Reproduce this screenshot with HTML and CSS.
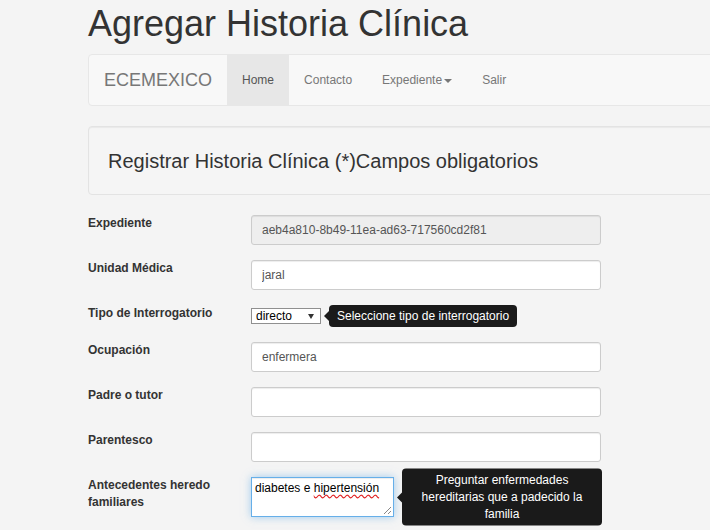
FILE: index.html
```html
<!DOCTYPE html>
<html lang="es">
<head>
  <meta charset="UTF-8">
  <meta name="viewport" content="width=device-width, initial-scale=1.0">
  <title>Agregar Historia Clínica</title>
  <link rel="stylesheet" href="styles.css">
</head>
<body>
  <div class="container">
    <h1>Agregar Historia Clínica</h1>

    <div class="navbar">
      <a class="brand" href="#">ECEMEXICO</a>
      <ul class="nav">
        <li class="active"><a href="#">Home</a></li>
        <li><a href="#">Contacto</a></li>
        <li><a href="#">Expediente<span class="caret"></span></a></li>
        <li><a href="#">Salir</a></li>
      </ul>
    </div>

    <div class="well">Registrar Historia Clínica (*)Campos obligatorios</div>

    <form class="form-horizontal">
      <div class="form-group">
        <label>Expediente</label>
        <input type="text" class="form-control" value="aeb4a810-8b49-11ea-ad63-717560cd2f81" disabled>
      </div>
      <div class="form-group">
        <label>Unidad Médica</label>
        <input type="text" class="form-control" value="jaral">
      </div>
      <div class="form-group">
        <label>Tipo de Interrogatorio</label>
        <div class="control-inline">
          <div class="has-tip">
            <span class="select-wrap">
              <select>
                <option>directo</option>
                <option>indirecto</option>
              </select>
            </span>
            <div class="tip">Seleccione tipo de interrogatorio</div>
          </div>
        </div>
      </div>
      <div class="form-group">
        <label>Ocupación</label>
        <input type="text" class="form-control" value="enfermera">
      </div>
      <div class="form-group">
        <label>Padre o tutor</label>
        <input type="text" class="form-control">
      </div>
      <div class="form-group">
        <label>Parentesco</label>
        <input type="text" class="form-control">
      </div>
      <div class="form-group">
        <label>Antecedentes heredo familiares</label>
        <div class="has-tip">
          <div class="textarea">diabetes e <span class="misspelled">hipertensión</span>
            <svg class="grip" width="8" height="8" viewBox="0 0 8 8">
              <line x1="8" y1="1" x2="1" y2="8" stroke="#888" stroke-width="1"/>
              <line x1="8" y1="5" x2="5" y2="8" stroke="#888" stroke-width="1"/>
            </svg>
          </div>
          <div class="tip tip-wrap">Preguntar enfermedades hereditarias que a padecido la familia</div>
        </div>
      </div>
    </form>
  </div>
</body>
</html>
```

FILE: styles.css
```css
* { box-sizing: border-box; }
html, body { overflow: hidden; }
body {
  margin: 0;
  background: #f4f4f4;
  font-family: "Liberation Sans", Arial, sans-serif;
  font-size: 12px;
  line-height: 17px;
  color: #333;
}
.container {
  margin-left: 88px;
  width: 760px;
}
h1 {
  margin: 4px 0 10px;
  font-size: 36px;
  line-height: 40px;
  font-weight: normal;
  color: #333;
}

/* Navbar */
.navbar {
  display: flex;
  height: 52px;
  background: #f8f8f8;
  border: 1px solid #e7e7e7;
  border-radius: 4px;
  margin-bottom: 20px;
}
.brand {
  padding: 15px;
  font-size: 18px;
  line-height: 20px;
  color: #777;
  text-decoration: none;
}
.nav {
  display: flex;
  list-style: none;
  margin: 0;
  padding: 0;
}
.nav a {
  display: block;
  padding: 15px;
  line-height: 20px;
  color: #777;
  text-decoration: none;
}
.nav .active a {
  background: #e7e7e7;
  color: #555;
}
.caret {
  display: inline-block;
  width: 0;
  height: 0;
  margin-left: 2px;
  vertical-align: middle;
  border-top: 4px solid;
  border-left: 4px solid transparent;
  border-right: 4px solid transparent;
}

/* Well */
.well {
  padding: 20px 19px 18px;
  font-size: 20px;
  line-height: 29px;
  background: #f5f5f5;
  border: 1px solid #e3e3e3;
  border-radius: 4px;
  box-shadow: inset 0 1px 1px rgba(0,0,0,0.05);
  margin-bottom: 20px;
}

/* Form */
.form-group {
  display: flex;
  align-items: flex-start;
  margin-bottom: 15px;
}
.form-group label {
  flex: 0 0 163px;
  padding-right: 15px;
  font-weight: bold;
}
.form-control {
  width: 350px;
  height: 30px;
  padding: 5px 10px;
  font-family: inherit;
  font-size: 12px;
  color: #555;
  background: #fff;
  border: 1px solid #ccc;
  border-radius: 3px;
  box-shadow: inset 0 1px 1px rgba(0,0,0,0.075);
}
.form-control:disabled {
  background: #eee;
}
.control-inline {
  display: flex;
  align-items: center;
  height: 22px;
}
.has-tip {
  position: relative;
  display: inline-flex;
  align-items: center;
}
.select-wrap {
  position: relative;
  display: inline-block;
}
.select-wrap select {
  appearance: none;
  -webkit-appearance: none;
  width: 70px;
  height: 16px;
  padding: 0 0 0 4px;
  font-family: inherit;
  font-size: 12px;
  line-height: 14px;
  color: #000;
  background: #fff;
  border: 1px solid #8f8f8f;
  border-radius: 0;
}
.select-wrap::after {
  content: "";
  position: absolute;
  right: 7px;
  top: 6px;
  border-top: 5px solid #333;
  border-left: 3px solid transparent;
  border-right: 3px solid transparent;
  pointer-events: none;
}

/* Textarea */
.textarea {
  position: relative;
  width: 143px;
  height: 40px;
  padding: 2px 3px;
  color: #000;
  background: #fff;
  border: 1px solid #66afe9;
  box-shadow: inset 0 1px 1px rgba(0,0,0,0.075), 0 0 8px rgba(102,175,233,0.6);
}
.misspelled {
  text-decoration: underline wavy #e02020;
  text-decoration-skip-ink: none;
  text-underline-offset: 2px;
}
.grip {
  position: absolute;
  right: 2px;
  bottom: 2px;
}

/* Tooltips */
.tip {
  position: absolute;
  left: 100%;
  top: 50%;
  transform: translateY(-50%);
  margin-left: 8px;
  width: max-content;
  max-width: 200px;
  padding: 3px 8px;
  line-height: 16px;
  color: #fff;
  background: #1a1a1a;
  border-radius: 4px;
  text-align: center;
}
.tip::before {
  content: "";
  position: absolute;
  left: -5px;
  top: 50%;
  margin-top: -5px;
  border-right: 5px solid #1a1a1a;
  border-top: 5px solid transparent;
  border-bottom: 5px solid transparent;
}
.tip-wrap {
  line-height: 17px;
}
```
